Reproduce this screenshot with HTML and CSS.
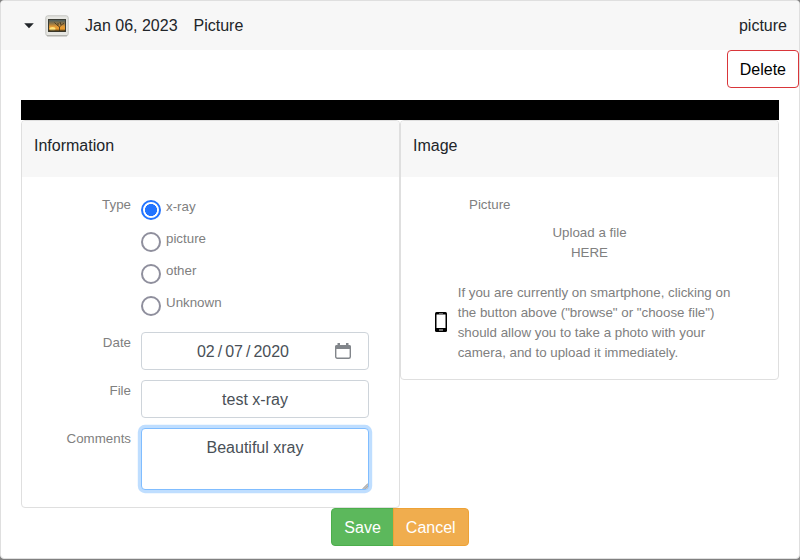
FILE: index.html
```html
<!DOCTYPE html>
<html lang="en">
<head>
<meta charset="utf-8">
<title>Picture</title>
<link rel="stylesheet" href="styles.css">
</head>
<body>
<main class="document">
  <header class="document-header">
    <svg class="caret" viewBox="0 0 10 6"><path d="M.2.2h9.600L5 5.200z" fill="#212529"/></svg>
    <svg class="thumb" viewBox="0 0 24 22">
      <defs>
        <linearGradient id="sky" x1="0" y1="0" x2="0" y2="1">
          <stop offset="0" stop-color="#4e5f60"/>
          <stop offset=".3" stop-color="#8a7448"/>
          <stop offset=".6" stop-color="#e39a35"/>
          <stop offset="1" stop-color="#ee9a25"/>
        </linearGradient>
      </defs>
      <rect x=".8" y=".8" width="22.4" height="20" rx="2" fill="#e6e6e2" stroke="#c3c4c0"/>
      <path d="M2 20.8h20" stroke="#a5a6a2"/>
      <rect x="3" y="4" width="18" height="13" fill="#3b3d34"/>
      <rect x="4" y="5" width="16" height="11" fill="url(#sky)"/>
      <ellipse cx="7.500" cy="14" rx="3" ry="2" fill="#ffe27a"/>
      <path d="M4 16h16v-.8H4zM14.500 16v-4l-3-2.500-2-2M14.500 12l3-3 1.500-.5M13 10.500V8M16 10l-1-3" fill="none" stroke="#3b301c" stroke-width=".8"/>
    </svg>
    <span class="date">Jan 06, 2023</span>
    <span class="name">Picture</span>
    <span class="kind">picture</span>
  </header>
  <div class="toolbar"><button class="btn btn-delete">Delete</button></div>
  <div class="content">
    <div class="strip"></div>
    <div class="columns">
      <section class="card">
        <h2 class="card-title">Information</h2>
        <div class="form">
          <div class="row">
            <span class="label">Type</span>
            <div class="options">
              <label class="option"><span class="radio checked"></span>x-ray</label>
              <label class="option"><span class="radio"></span>picture</label>
              <label class="option"><span class="radio"></span>other</label>
              <label class="option"><span class="radio"></span>Unknown</label>
            </div>
          </div>
          <div class="row">
            <span class="label">Date</span>
            <div class="control date-control">
              <span class="date-value"><span>02</span><span>/</span><span>07</span><span>/</span><span>2020</span></span>
              <svg class="calendar" viewBox="0 0 16 16">
                <rect x=".7" y="2.700" width="14.600" height="12.600" rx="1.500" fill="#fff" stroke="#82868b" stroke-width="1.400"/>
                <path d="M2.500 0h2.500v2h6V0h2.500v2H14a2 2 0 0 1 2 2v2H0V4a2 2 0 0 1 2-2h.5z" fill="#82868b"/>
              </svg>
            </div>
          </div>
          <div class="row">
            <span class="label">File</span>
            <input class="control" type="text" value="test x-ray">
          </div>
          <div class="row">
            <span class="label">Comments</span>
            <div class="comments-box">
              <textarea class="control comments">Beautiful xray</textarea>
              <svg class="grip" viewBox="0 0 7 7"><path d="M7 0v5a2 2 0 0 1-2 2H0z" fill="#c4c4c4"/><path d="M1 6.500L6.500 1M3.500 6.800L6.800 3.500" stroke="#8a8a8a" stroke-width=".6"/></svg>
            </div>
          </div>
        </div>
      </section>
      <section class="card">
        <h2 class="card-title">Image</h2>
        <div class="upload">
          <div class="upload-label">Picture</div>
          <div class="dropzone">Upload a file<br>HERE</div>
          <div class="hint">
            <svg class="phone" viewBox="0 0 12 20">
              <rect width="12" height="20" rx="1.500" fill="#000"/>
              <rect x="1.500" y="2.500" width="9" height="13.500" fill="#fff"/>
              <path d="M4 1.500h4" stroke="#888" stroke-width=".8"/>
              <path d="M4 18h4" stroke="#ddd"/>
            </svg>
            <p class="hint-text">If you are currently on smartphone, clicking on<br>the button above ("browse" or "choose file")<br>should allow you to take a photo with your<br>camera, and to upload it immediately.</p>
          </div>
        </div>
      </section>
    </div>
    <div class="actions"><button class="btn btn-save">Save</button><button class="btn btn-cancel">Cancel</button></div>
  </div>
</main>
</body>
</html>
```

FILE: styles.css
```css
* { box-sizing: border-box; }

body {
  margin: 0;
  height: 560px;
  overflow: hidden;
  background: #808080;
  font: 16px/24px "Liberation Sans", Arial, sans-serif;
  color: #212529;
}

.document {
  height: 559px;
  background: #fff;
  border: 1px solid #dfdfdf;
  border-radius: 4px;
}

.document-header {
  display: flex;
  align-items: center;
  height: 49px;
  padding: 0 12px 0 22.500px;
  background: #f7f7f7;
  border-radius: 3px 3px 0 0;
}

.caret { width: 10px; height: 6px; }
.thumb { width: 24px; height: 22px; margin-left: 11.500px; }
.date { margin-left: 16px; }
.name { margin-left: 16px; }
.kind { margin-left: auto; }

.toolbar { display: flex; justify-content: flex-end; height: 50px; }

.btn {
  height: 38px;
  padding: 7px 12px 5px;
  border: 1px solid;
  border-radius: 4px;
  font: inherit;
  color: #fff;
}

.btn-delete { background: #fff; border-color: #d9363a; color: #000; }
.btn-save { background: #5cb85c; border-color: #4cae4c; border-radius: 4px 0 0 4px; }
.btn-cancel { background: #f0ad4e; border-color: #eea236; border-radius: 0 4px 4px 0; margin-left: -1px; }

.content { padding: 0 20px; }
.strip { height: 20px; background: #000; }

.columns { display: grid; grid-template-columns: 1fr 1fr; align-items: start; }

.card { border: 1px solid #dfdfdf; border-radius: 4px; background: #fff; }

.card-title {
  margin: 0;
  height: 56px;
  padding: 13px 12px 11px;
  background: #f7f7f7;
  border-radius: 3px 3px 0 0;
  font-size: 16px;
  font-weight: 400;
}

.form { display: flex; flex-direction: column; gap: 10px; height: 330px; padding: 17px 30px 0 20px; }

.row { display: grid; grid-template-columns: 89px 228px; column-gap: 10px; }

.label, .option, .upload { font-size: 13.333px; line-height: 20px; color: #808080; }
.label { padding-top: 1px; text-align: right; }

.options { height: 128px; padding-top: 3px; }
.option { display: flex; height: 32px; gap: 5px; }

.radio {
  width: 20px;
  height: 20px;
  margin-top: 3px;
  border: 2px solid #8f8f9d;
  border-radius: 50%;
  background: #fff;
}
.radio.checked { border-color: #2374ff; background: radial-gradient(circle, #2374ff 5.700px, #fff 6.300px); }

.control {
  width: 228px;
  height: 38px;
  padding: 7px 12px 5px;
  border: 1px solid #ced4da;
  border-radius: 4px;
  background: #fff;
  color: #495057;
  font: inherit;
  text-align: center;
}

.date-control { display: flex; align-items: center; justify-content: flex-end; padding-right: 17px; }
.date-value { display: flex; gap: 3px; margin-right: 46px; }
.calendar { width: 16px; height: 16px; margin-top: -2px; }

.comments-box { position: relative; height: 62px; }
.comments {
  display: block;
  height: 62px;
  resize: none;
  border-color: #80bdff;
  box-shadow: 0 0 0 3.200px #bfdeff;
}
.grip { position: absolute; right: 1px; bottom: 1px; width: 6px; height: 6px; }

.upload { height: 202px; padding-top: 18px; }
.upload-label { margin-left: 68px; }
.dropzone { margin-top: 8px; text-align: center; }
.hint { display: flex; align-items: center; margin: 20px 0 0 34px; }
.phone { width: 12px; height: 20px; margin-top: -2px; }
.hint-text { margin: 0 0 0 10.700px; }

.actions { display: flex; justify-content: center; }
```
